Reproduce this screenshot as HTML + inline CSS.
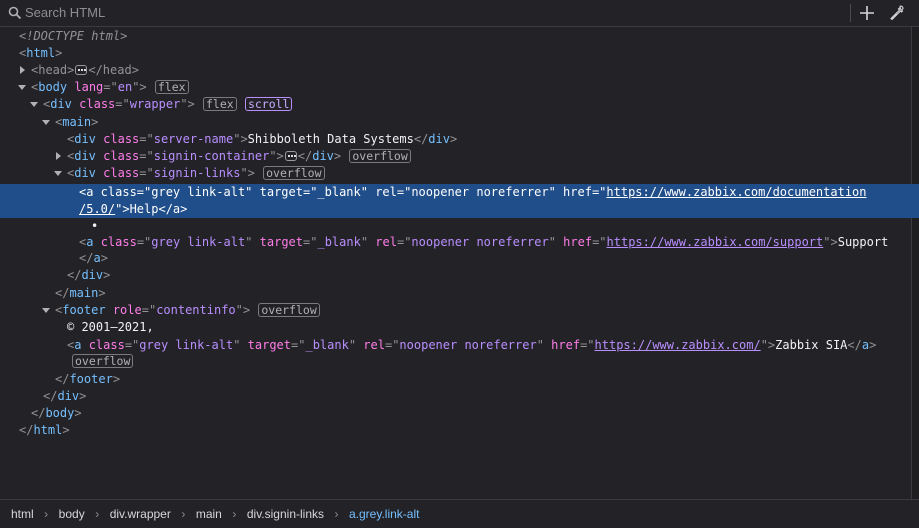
<!DOCTYPE html>
<html><head><style>
html,body{margin:0;padding:0;background:#232327;width:919px;height:528px;overflow:hidden;position:relative}
.top{position:absolute;left:0;top:0;width:919px;height:26px;border-bottom:1px solid #3a3a3f;background:#232327}
.search{position:absolute;left:25px;top:5px;font:13px "Liberation Sans",sans-serif;color:#8e8e92}
.ln{position:absolute;left:0;width:911px;height:17.2px;font:12px/17.2px "DejaVu Sans Mono",monospace;white-space:pre;color:#939395}
.sel{background:#204e8a;color:#fff}
.sel *{color:#fff!important}
.t{color:#75bfff}.an{color:#ff7de9}.av{color:#b98eff}.tx{color:#f2f2f4}
.u{text-decoration:underline}
.b{display:inline-block;font:11.5px/12px "DejaVu Sans Mono",monospace;color:#b1b1b3;border:1px solid #7a7a7f;border-radius:3px;padding:0 2px;vertical-align:0;margin-left:1px}
.b.p{border-color:#b98eff;color:#c9aaff}
.dots{display:inline-block;width:12px;height:10px;border:1px solid #9a9a9e;border-radius:3px;vertical-align:-1px;position:relative;margin:0 1px;box-sizing:border-box}
.dots:after{content:"";position:absolute;left:2px;top:3px;width:2px;height:2px;background:#ddd;box-shadow:3px 0 #ddd,6px 0 #ddd}
.tri{position:absolute;width:0;height:0}
.td{border-left:4px solid transparent;border-right:4px solid transparent;border-top:5px solid #b1b1b3;margin-top:6px}
.tr{border-top:4px solid transparent;border-bottom:4px solid transparent;border-left:5px solid #b1b1b3;margin-top:4.5px}
.bc{position:absolute;left:0;top:499px;width:919px;height:29px;border-top:1px solid #3a3a3f;font:12px/29px "Liberation Sans",sans-serif;color:#d7d7db}
.bc .s{color:#8e8e92;margin:0 10.5px;font-size:12px}
.sb{position:absolute;left:911px;top:27px;width:8px;height:472px;border-left:1px solid #3a3a3f;background:#1e1e21}
</style></head><body>
<div class="top">
<svg style="position:absolute;left:8px;top:6px" width="14" height="14" viewBox="0 0 14 14"><circle cx="5.5" cy="5.5" r="4" fill="none" stroke="#b1b1b3" stroke-width="1.6"/><path d="M8.5 8.5L12.5 12.5" stroke="#b1b1b3" stroke-width="1.8"/></svg>
<div class="search">Search HTML</div>
<div style="position:absolute;left:850px;top:4px;width:1px;height:18px;background:#4a4a4f"></div>
<svg style="position:absolute;left:860px;top:6px" width="14" height="14"><path d="M7 0V14M0 7H14" stroke="#d7d7db" stroke-width="1.6"/></svg>
<svg style="position:absolute;left:890px;top:5px" width="15" height="16" viewBox="0 0 15 16"><path d="M10 1.5c1-1 3 0 3 2l-1.5 1.5 1 1-1 1-1-1L4 12.5 2 14.5 1 13.5l2-2 6.5-6.5-1-1 1-1 1 1z" fill="none" stroke="#d7d7db" stroke-width="1.1"/><path d="M2 14l5-5" stroke="#d7d7db" stroke-width="1"/></svg>
</div>
<div class="sb"></div>

<div class="ln" style="top:27.5px;padding-left:19px"><i>&lt;!DOCTYPE html&gt;</i></div>
<div class="ln" style="top:44.7px;padding-left:19px">&lt;<span class="t">html</span>&gt;</div>
<div class="ln" style="top:61.9px;padding-left:31px"><span class="tri tr" style="left:20px"></span>&lt;head&gt;<span class="dots"></span>&lt;/head&gt;</div>
<div class="ln" style="top:79.1px;padding-left:31px"><span class="tri td" style="left:18px"></span>&lt;<span class="t">body</span> <span class="an">lang</span>="<span class="av">en</span>"&gt; <span class="b">flex</span></div>
<div class="ln" style="top:96.3px;padding-left:43px"><span class="tri td" style="left:30px"></span>&lt;<span class="t">div</span> <span class="an">class</span>="<span class="av">wrapper</span>"&gt; <span class="b">flex</span> <span class="b p">scroll</span></div>
<div class="ln" style="top:113.5px;padding-left:55px"><span class="tri td" style="left:42px"></span>&lt;<span class="t">main</span>&gt;</div>
<div class="ln" style="top:130.7px;padding-left:67px">&lt;<span class="t">div</span> <span class="an">class</span>="<span class="av">server-name</span>"&gt;<span class="tx">Shibboleth Data Systems</span>&lt;/<span class="t">div</span>&gt;</div>
<div class="ln" style="top:147.9px;padding-left:67px"><span class="tri tr" style="left:56px"></span>&lt;<span class="t">div</span> <span class="an">class</span>="<span class="av">signin-container</span>"&gt;<span class="dots"></span>&lt;/<span class="t">div</span>&gt; <span class="b">overflow</span></div>
<div class="ln" style="top:165.1px;padding-left:67px"><span class="tri td" style="left:54px"></span>&lt;<span class="t">div</span> <span class="an">class</span>="<span class="av">signin-links</span>"&gt; <span class="b">overflow</span></div>
<div class="ln sel" style="top:184px;height:34px;padding-left:79px;line-height:17px">&lt;a class="grey link-alt" target="_blank" rel="noopener noreferrer" href="<span class="u">https://www.zabbix.com/documentation</span>
<span class="u">/5.0/</span>"&gt;Help&lt;/a&gt;</div>
<div class="ln" style="top:217.5px;padding-left:91px"><span class="tx">•</span></div>
<div class="ln" style="top:234.2px;padding-left:79px">&lt;<span class="t">a</span> <span class="an">class</span>="<span class="av">grey link-alt</span>" <span class="an">target</span>="<span class="av">_blank</span>" <span class="an">rel</span>="<span class="av">noopener noreferrer</span>" <span class="an">href</span>="<span class="av u">https://www.zabbix.com/support</span>"&gt;<span class="tx">Support</span></div>
<div class="ln" style="top:250.4px;padding-left:79px">&lt;/<span class="t">a</span>&gt;</div>
<div class="ln" style="top:267px;padding-left:67px">&lt;/<span class="t">div</span>&gt;</div>
<div class="ln" style="top:285px;padding-left:55px">&lt;/<span class="t">main</span>&gt;</div>
<div class="ln" style="top:302.2px;padding-left:55px"><span class="tri td" style="left:42px"></span>&lt;<span class="t">footer</span> <span class="an">role</span>="<span class="av">contentinfo</span>"&gt; <span class="b">overflow</span></div>
<div class="ln" style="top:319.4px;padding-left:67px"><span class="tx">© 2001–2021,</span></div>
<div class="ln" style="top:336.6px;padding-left:67px">&lt;<span class="t">a</span> <span class="an">class</span>="<span class="av">grey link-alt</span>" <span class="an">target</span>="<span class="av">_blank</span>" <span class="an">rel</span>="<span class="av">noopener noreferrer</span>" <span class="an">href</span>="<span class="av u">https://www.zabbix.com/</span>"&gt;<span class="tx">Zabbix SIA</span>&lt;/<span class="t">a</span>&gt;</div>
<div class="ln" style="top:353.3px;padding-left:72px"><span class="b" style="margin-left:0">overflow</span></div>
<div class="ln" style="top:370.5px;padding-left:55px">&lt;/<span class="t">footer</span>&gt;</div>
<div class="ln" style="top:387.5px;padding-left:43px">&lt;/<span class="t">div</span>&gt;</div>
<div class="ln" style="top:405px;padding-left:31px">&lt;/<span class="t">body</span>&gt;</div>
<div class="ln" style="top:422.2px;padding-left:19px">&lt;/<span class="t">html</span>&gt;</div>

<div class="bc"><span style="margin-left:11px">html</span><span class="s">›</span><span>body</span><span class="s">›</span><span>div.wrapper</span><span class="s">›</span><span>main</span><span class="s">›</span><span>div.signin-links</span><span class="s">›</span><span style="color:#75bfff">a.grey.link-alt</span></div>
</body></html>
